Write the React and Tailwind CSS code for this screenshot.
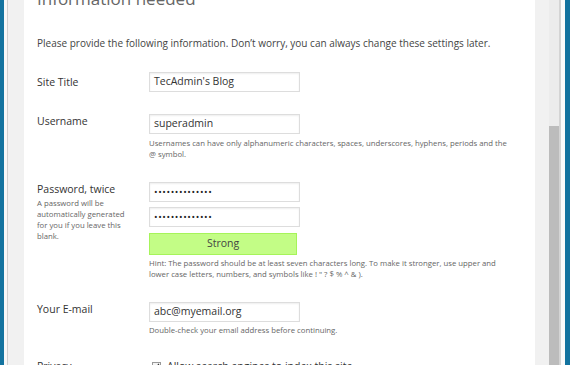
import React from 'react';

const Field = ({ value, type = 'text' }) => (
  <div className="flex h-[20px] w-[151px] items-center border border-[#dddddd] bg-white px-[4px] text-[10.5px] text-[#333] shadow-[inset_0_1px_2px_rgba(0,0,0,0.07)]">
    {type === 'password' ? (
      <span className="text-[9.5px] tracking-[0.6px] text-[#222]">{'••••••••••••••'}</span>
    ) : (
      value
    )}
  </div>
);

const App = () => {
  return (
    <div
      className="flex h-[365px] w-[570px] overflow-hidden bg-[#f1f1f1]"
      style={{ fontFamily: '"Open Sans", "Liberation Sans", sans-serif' }}
    >
      <div className="w-[4px] bg-[#13739f]" />
      <div className="w-[3px] bg-[#f7f7f7]" />
      <div className="w-[1px] bg-[#cfcfcf]" />
      <div className="w-[16px]" />

      <div className="flex w-[511px] flex-col bg-white pl-[13px] pr-[14px]">
        <h1 className="mt-[-13px] text-[17px] leading-[24px] text-[#666]">Information needed</h1>
        <div className="mt-[4px] h-[1px] bg-[#e2e2e2]" />

        <p className="mt-[20px] whitespace-nowrap text-[10px] leading-[16px] text-[#444]">
          Please provide the following information. Don’t worry, you can always change these settings later.
        </p>

        {/* Site title */}
        <div className="mt-[21px] flex">
          <div className="w-[112px] text-[10.5px] leading-[20px] text-[#333]">Site Title</div>
          <Field value="TecAdmin's Blog" />
        </div>

        {/* Username */}
        <div className="mt-[22px] flex">
          <div className="mt-[-1px] w-[112px] text-[10.5px] leading-[16px] text-[#333]">Username</div>
          <div>
            <Field value="superadmin" />
            <p className="mt-[4px] whitespace-nowrap text-[7.75px] leading-[11px] text-[#666]">
              Usernames can have only alphanumeric characters, spaces, underscores, hyphens, periods and the
              <br />@ symbol.
            </p>
          </div>
        </div>

        {/* Password */}
        <div className="mt-[22px] flex">
          <div className="mt-[-1px] w-[112px]">
            <div className="text-[10.5px] leading-[16px] text-[#333]">Password, twice</div>
            <p className="mt-[1px] whitespace-nowrap text-[7.75px] leading-[11px] text-[#666]">
              A password will be
              <br />
              automatically generated
              <br />
              for you if you leave this
              <br />
              blank.
            </p>
          </div>
          <div>
            <Field type="password" />
            <div className="mt-[5px]">
              <Field type="password" />
            </div>
            <div className="mt-[6px] flex h-[22px] w-[148px] items-center justify-center border border-[#a6f45a] bg-[#c3fd86] text-[10.5px] text-[#444]">
              Strong
            </div>
            <p className="mt-[3px] whitespace-nowrap text-[7.75px] leading-[11px] text-[#666]">
              Hint: The password should be at least seven characters long. To make it stronger, use upper and
              <br />
              lower case letters, numbers, and symbols like ! " ? $ % ^ &amp; ).
            </p>
          </div>
        </div>

        {/* Email */}
        <div className="mt-[22px] flex">
          <div className="mt-[-1px] w-[112px] text-[10.5px] leading-[16px] text-[#333]">Your E-mail</div>
          <div>
            <Field value="abc@myemail.org" />
            <p className="mt-[3px] whitespace-nowrap text-[7.75px] leading-[11px] text-[#666]">
              Double-check your email address before continuing.
            </p>
          </div>
        </div>

        {/* Privacy */}
        <div className="mt-[22px] flex">
          <div className="w-[112px] text-[10.5px] leading-[16px] text-[#333]">Privacy</div>
          <div className="flex items-center pl-[3px]">
            <span className="flex h-[9px] w-[9px] items-center justify-center border border-[#999] bg-[#f4f4f4]">
              <svg viewBox="0 0 10 10" className="h-[8px] w-[8px]">
                <path d="M2 5 L4 7.5 L8.5 2" fill="none" stroke="#333" strokeWidth="1.6" />
              </svg>
            </span>
            <span className="ml-[6px] text-[10.5px] leading-[16px] text-[#333]">
              Allow search engines to index this site.
            </span>
          </div>
        </div>
      </div>

      <div className="w-[14px]" />
      <div className="flex w-[10px] flex-col bg-[#ececec]">
        <div className="mt-[126px] flex-1 bg-[#bcbcbc]" />
      </div>
      <div className="w-[2px] bg-[#d4d4d4]" />
      <div className="w-[4px] bg-[#fbfbfb]" />
      <div className="w-[5px] bg-[#13739f]" />
    </div>
  );
};

export default App;
